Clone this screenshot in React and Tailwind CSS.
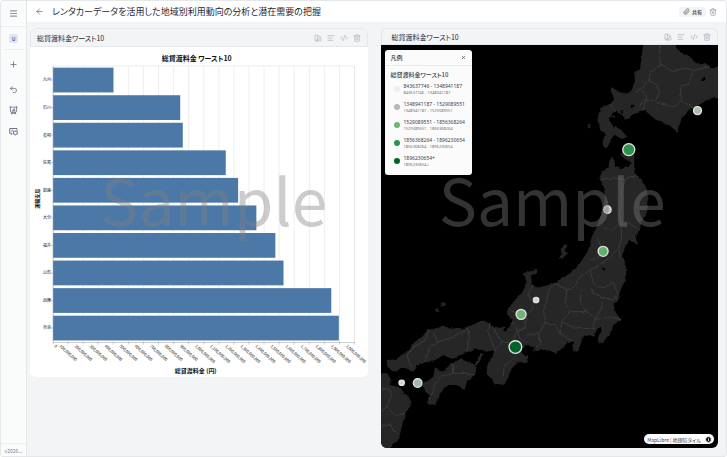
import React from "react";
import { ArrowLeft, Menu, Plus, Undo2, Trash2, SwatchBook, TextAlignStart, CodeXml, Paperclip, X, Info } from "lucide-react";
import { HiOutlinePresentationChartBar } from "react-icons/hi2";

const BARS = [
  { name: "九州", value: 401 },
  { name: "石川", value: 844 },
  { name: "長崎", value: 861 },
  { name: "佐賀", value: 1146 },
  { name: "釧路", value: 1228 },
  { name: "大分", value: 1349 },
  { name: "福井", value: 1475 },
  { name: "山形", value: 1529 },
  { name: "函館", value: 1846 },
  { name: "奈良", value: 1896 },
];

const LEGEND = [
  { label: "843637746 - 1348941187", color: "bg-[#eeeeee]" },
  { label: "1348941187 - 1529089551", color: "bg-[#b4b8b6]" },
  { label: "1529089551 - 1856368264", color: "bg-[#74b378]" },
  { label: "1856368264 - 1896230654", color: "bg-[#2f9150]" },
  { label: "1896230654+", color: "bg-[#006428]" },
];

const MARKERS = [
  { x: 952, y: 332, r: 12, fill: "#a9c0ab" },
  { x: 746, y: 449, r: 18, fill: "#2f9150" },
  { x: 682, y: 629, r: 11, fill: "#b4b9b8" },
  { x: 669, y: 754, r: 15, fill: "#5fb169" },
  { x: 468, y: 900, r: 8, fill: "#cfd1d0" },
  { x: 423, y: 943, r: 15, fill: "#74b378" },
  { x: 406, y: 1041, r: 19, fill: "#006428" },
  { x: 65, y: 1148, r: 8, fill: "#d4d6d5" },
  { x: 113, y: 1149, r: 13, fill: "#a3b9a5" },
];

const LAND = [
  "M790 125L880 125L895 150L925 170L940 183L960 192L975 190L1000 205L1015 198L1025 200L1025 298L1000 293L985 297L965 310L945 322L925 330L912 350L897 370L893 397L870 378L845 368L815 350L793 330L775 335L735 360L727 345L705 335L690 345L690 365L700 380L715 385L742 410L725 418L705 404L690 420L685 440L672 447L667 425L674 405L660 385L652 360L660 325L690 312L705 295L688 275L695 262L715 275L735 282L755 270L765 240L762 220L780 205L785 170Z",
  "M690 466L702 480L708 500L722 508L735 497L745 502L752 490L722 466L730 446L750 462L763 465L762 500L768 520L785 540L797 560L806 600L800 640L783 665L780 690L765 705L775 735L750 720L735 740L728 770L738 790L738 840L725 860L712 900L700 915L708 940L725 960L700 975L690 1000L670 1025L652 1030L657 1005L668 990L663 980L650 987L642 1010L628 1005L608 1010L602 1030L592 1055L578 1050L578 1022L560 1030L540 1050L525 1058L500 1048L455 1055L468 1043L440 1035L422 1045L428 1062L445 1070L442 1085L410 1090L395 1105L385 1130L372 1155L345 1150L320 1120L322 1095L338 1070L342 1050L320 1055L290 1045L250 1060L215 1077L190 1062L165 1080L140 1085L112 1095L100 1115L70 1105L40 1112L22 1100L20 1080L45 1078L75 1060L100 1030L145 990L185 980L250 985L300 965L325 965L345 985L380 980L395 965L380 940L390 915L425 880L440 850L432 820L475 805L470 820L452 830L458 855L480 862L530 845L570 820L600 790L625 750L635 710L650 680L665 640L674 600L672 560L658 535L665 515L685 505Z",
  "M165 1102L188 1112L215 1092L240 1077L290 1095L285 1125L262 1140L252 1172L235 1155L205 1155L180 1180L165 1215L140 1210L150 1190L134 1170L130 1150L160 1130Z",
  "M-5 1115L20 1120L32 1135L30 1155L55 1160L85 1190L97 1210L75 1240L65 1280L55 1325L42 1330L32 1344L-5 1344Z",
  "M557 732L562 738L552 754L564 758L545 778L538 770L547 762L540 750Z",
  "M302 1058L309 1065L292 1095L284 1090Z",
  "M181 910L190 906L197 914L190 922L183 922Z",
  "M166 929L174 925L178 932L170 937Z",
  "M625 375L634 368L630 384L623 385Z",
];

const BORDERS = [
  "M840 135L838 170L842 195L812 215L805 240L780 270L800 290L788 330",
  "M842 195L880 215L915 205L940 212L990 200",
  "M805 240L830 255L838 280L830 300M780 270L765 278M842 312L812 300L790 300L778 320M842 312L880 320L905 305L940 322",
  "M940 212L925 250L900 262L905 305M690 345L705 352M690 312L705 335",
  "M663 538L700 534L735 540L750 530L768 528M735 540L722 575L728 600L718 640L722 672L700 690L668 685",
  "M722 672L745 668L770 685M722 672L725 710L715 745L722 775L738 785M650 715L668 750L650 775L625 780",
  "M715 745L690 772L650 800L630 810L640 850L665 865L700 850L712 880L700 900L668 892L640 880L635 865",
  "M630 810L600 830L585 860L560 870L525 850M560 870L555 910L570 935L620 935L645 955L640 985M668 892L665 925L645 955L690 950L725 960",
  "M620 935L600 905L605 870M570 935L545 965L540 1000L565 1015L578 1022M545 965L575 980L610 985L640 985",
  "M525 850L505 870L500 905L490 930L495 970L475 1000L480 1025L468 1043M495 970L525 975L540 1000",
  "M458 855L445 880L460 920L440 945L415 945L395 930M440 945L435 985L410 990L400 965M410 990L420 1015L440 1030M475 1000L440 1005",
  "M435 985L405 1000L400 1030L410 1060L395 1080L372 1100L370 1130M400 1030L365 1025L345 1050M365 1025L340 985M330 965L325 1000L345 1050",
  "M262 985L268 1015L260 1055M262 985L225 1010L175 1025L150 1040L135 1085M145 990L135 1025L100 1040L80 1065L95 1105M175 1025L160 1000",
  "M215 1092L220 1120L185 1130L165 1150L155 1185L145 1200M220 1120L255 1120L285 1125M220 1120L222 1095",
  "M3 1170L25 1165L35 1185L20 1220L45 1245L75 1240M3 1280L30 1270L45 1300M20 1220L3 1235",
];

const LAKES = [
  "M400 958L388 975L378 995L372 990L385 965Z",
  "M664 803L676 803L674 811L666 810Z",
  "M752 315L762 314L760 322L753 322Z",
  "M722 332L730 331L728 338L722 337Z",
  "M965 235L974 231L977 238L969 242Z",
];

function CardActions() {
  const items = [
    ["スタイル", SwatchBook],
    ["一覧", TextAlignStart],
    ["コード", CodeXml],
    ["削除", Trash2],
  ];
  return (
    <div className="flex items-center gap-[5px] text-[#a6afbf]">
      {items.map(([label, Icon]) => (
        <button key={label} type="button" aria-label={label}>
          <Icon className="size-2" strokeWidth={2} />
        </button>
      ))}
    </div>
  );
}

function Watermark({ className }) {
  return (
    <div className={`pointer-events-none absolute inset-x-0 top-[134px] text-center text-[64px] leading-[72px] text-[rgba(128,128,128,0.4)] ${className}`}>
      Sample
    </div>
  );
}

function BarChart() {
  const x0 = 52;
  const unit = 15.1;
  const ticks = Array.from({ length: 21 }, (_, i) => i);
  return (
    <svg viewBox="29 47 338 330" className="block w-full" role="img" aria-label="総貸渡料金 ワースト10">
      <text x="196" y="61" textAnchor="middle" fontSize="7" fontWeight="700" fill="#111">総貸渡料金 ワースト10</text>
      {ticks.map((t) => (
        <line key={t} x1={x0 + t * unit} x2={x0 + t * unit} y1="66" y2="343" stroke="#e3e3e3" strokeWidth="0.6" />
      ))}
      <path d="M52 66H354V343" fill="none" stroke="#e3e3e3" strokeWidth="0.6" />
      {BARS.map((b, i) => (
        <g key={b.name}>
          <rect x={x0} y={67.7 + i * 27.6} width={(b.value / 100) * unit} height="24.8" fill="#4c78a8" />
          <line x1="50" x2="52" y1={80 + i * 27.6} y2={80 + i * 27.6} stroke="#999" strokeWidth="0.5" />
          <text x="50" y={81.5 + i * 27.6} textAnchor="end" fontSize="4" fill="#222">{b.name}</text>
        </g>
      ))}
      <path d="M52.3 66V343H354" fill="none" stroke="#999" strokeWidth="0.5" />
      {ticks.map((t) => {
        const x = x0 + t * unit;
        return (
          <g key={t}>
            <line x1={x} x2={x} y1="343" y2="345" stroke="#999" strokeWidth="0.5" />
            <text transform={`translate(${t === 0 ? x + 1 : x - 9} 347) rotate(42)`} fontSize="4" fill="#222">
              {(t * 100000000).toLocaleString("en-US")}
            </text>
          </g>
        );
      })}
      <text x="195" y="374" textAnchor="middle" fontSize="6" fontWeight="700" fill="#111">総貸渡料金 (円)</text>
      <text transform="translate(38 199) rotate(-90)" textAnchor="middle" fontSize="5" fontWeight="700" fill="#111">運輸支局</text>
    </svg>
  );
}

function JapanMap() {
  return (
    <svg viewBox="3 135 1012 1209" preserveAspectRatio="xMidYMid slice" className="absolute inset-0 size-full" role="img" aria-label="日本地図">
      <defs>
        <filter id="coast" x="-5%" y="-5%" width="110%" height="110%">
          <feTurbulence type="fractalNoise" baseFrequency="0.05" numOctaves="3" seed="4" />
          <feDisplacementMap in="SourceGraphic" scale="10" xChannelSelector="R" yChannelSelector="G" />
        </filter>
      </defs>
      <g filter="url(#coast)">
        <path d={LAND.join("")} fill="#262626" />
        <path d={BORDERS.join("")} fill="none" stroke="#404040" strokeWidth="2.5" />
        <path d={LAKES.join("")} fill="#000" />
      </g>
      {MARKERS.map((m) => (
        <circle key={m.x} cx={m.x} cy={m.y} r={m.r} fill={m.fill} stroke="#e2e4e3" strokeWidth="4" />
      ))}
    </svg>
  );
}

function Legend() {
  return (
    <section className="absolute top-[5px] left-1 w-[87px] rounded-[3px] bg-[#fbfbfb] text-[#374151]">
      <header className="flex h-4 items-center justify-between border-b border-[#e8eaed] px-[6px]">
        <h3 className="text-[6px] leading-2 font-medium">凡例</h3>
        <button type="button" aria-label="閉じる"><X className="size-[5px]" strokeWidth={3} /></button>
      </header>
      <div className="px-[6px] pt-[5px] pb-[5px]">
        <h4 className="mb-px text-[6px] leading-2 font-medium">総貸渡料金ワースト10</h4>
        <ul>
          {LEGEND.map((l) => (
            <li key={l.label} className="flex h-[18px] items-center gap-1 pl-[3px]">
              <span className={`size-[6px] shrink-0 rounded-full ${l.color}`} />
              <span className="flex flex-col whitespace-nowrap font-['Noto_Sans',sans-serif]">
                <span className="text-[5px] leading-[7px]">{l.label}</span>
                <span className="text-[4px] leading-[6px] text-[#6b7280]">{l.label}</span>
              </span>
            </li>
          ))}
        </ul>
      </div>
    </section>
  );
}

export default function App() {
  return (
    <div
      lang="ja"
      className="flex h-screen overflow-hidden rounded-[3px] border border-[#e5e7eb] bg-[#f3f4f6] font-['Noto_Sans_CJK_JP','Noto_Sans',sans-serif] text-[#1f2937] [font-feature-settings:'palt']"
    >
      <nav className="flex w-[26px] shrink-0 flex-col items-center border-r border-[#e5e7eb] bg-[#fafbfb] text-[#5a6880]">
        <button type="button" aria-label="メニュー" className="flex h-[26px] w-full items-center justify-center border-b border-[#eceef0]">
          <Menu className="size-[9px] text-[#8f98a5]" strokeWidth={3} />
        </button>
        <div className="flex h-[23px] w-5 items-center justify-center border-b border-[#eceef0]">
          <span className="flex size-[9px] items-center justify-center rounded-[2px] bg-[#dfe4f0] text-[5px] leading-none font-bold text-[#4f72b8]">U</span>
        </div>
        <button type="button" aria-label="追加" className="mt-[10px]"><Plus className="size-[9px]" strokeWidth={2} /></button>
        <button type="button" aria-label="元に戻す" className="mt-4"><Undo2 className="size-[9px]" strokeWidth={2} /></button>
        <button type="button" aria-label="ダッシュボード" className="mt-3"><HiOutlinePresentationChartBar className="size-[9px]" strokeWidth={2} /></button>
        <button type="button" aria-label="チャット" className="mt-3">
          <svg viewBox="0 0 24 24" className="size-[9px]" fill="none" stroke="currentColor" strokeWidth="2.4" strokeLinejoin="round" strokeLinecap="round">
            <path d="M7 17v3l-3-3H2V4h19v4M6 11l4-3M13 11h9v8h-3l-2 3-2-3h-2z" />
          </svg>
        </button>
        <div className="mt-auto flex h-[13px] w-full items-center justify-center border-t border-[#eceef0] text-[5px] leading-none text-[#7b8798]">v2026...</div>
      </nav>
      <div className="flex min-w-0 flex-1 flex-col">
        <header className="flex h-[21px] shrink-0 items-center bg-white pr-[9px] pl-2">
          <button type="button" aria-label="戻る"><ArrowLeft className="size-[9px] text-[#6b7280]" strokeWidth={2} /></button>
          <h1 className="ml-2 text-[9px] leading-3">レンタカーデータを活用した地域別利用動向の分析と潜在需要の把握</h1>
          <button type="button" className="ml-auto flex h-[10px] items-center gap-[2px] rounded-[2px] bg-[#f3f4f6] px-1 text-[5px] leading-none font-bold text-[#4b5563]">
            <Paperclip className="size-[7px]" />
            共有
          </button>
          <button type="button" aria-label="削除" className="ml-[3px]"><Trash2 className="size-2 text-[#8f98a5]" strokeWidth={2} /></button>
        </header>
        <main className="grid min-h-0 flex-1 grid-cols-2 gap-[13px] pt-[6px] pr-2 pb-2 pl-[3px]">
          <article className="relative self-start overflow-hidden rounded-md bg-white">
            <header className="flex h-[19px] items-center justify-between rounded-t-md border border-[#e5e7eb] bg-[#f3f4f6] px-[6px]">
              <h2 className="text-[7px] leading-[10px]">総貸渡料金ワースト10</h2>
              <CardActions />
            </header>
            <BarChart />
            <Watermark className="pl-[30px]" />
          </article>
          <article className="relative flex flex-col">
            <header className="flex h-[17px] shrink-0 items-center justify-between rounded-t-md border border-[#e5e7eb] bg-[#f3f4f6] pr-[6px] pl-[10px]">
              <h2 className="text-[7px] leading-[10px]">総貸渡料金ワースト10</h2>
              <CardActions />
            </header>
            <div className="relative flex-1 overflow-hidden rounded-b-md bg-black">
              <JapanMap />
              <Legend />
              <div className="absolute right-1 bottom-1 flex h-[10px] items-center gap-1 rounded-full bg-white pr-[2px] pl-[3px] text-[5px] leading-none text-[#374151]">
                <span><a href="#maplibre">MapLibre</a> | <a href="#gsi">地理院タイル</a></span>
                <Info className="size-[7px] fill-black text-white" strokeWidth={3} />
              </div>
            </div>
            <Watermark className="pl-[6px]" />
          </article>
        </main>
      </div>
    </div>
  );
}
